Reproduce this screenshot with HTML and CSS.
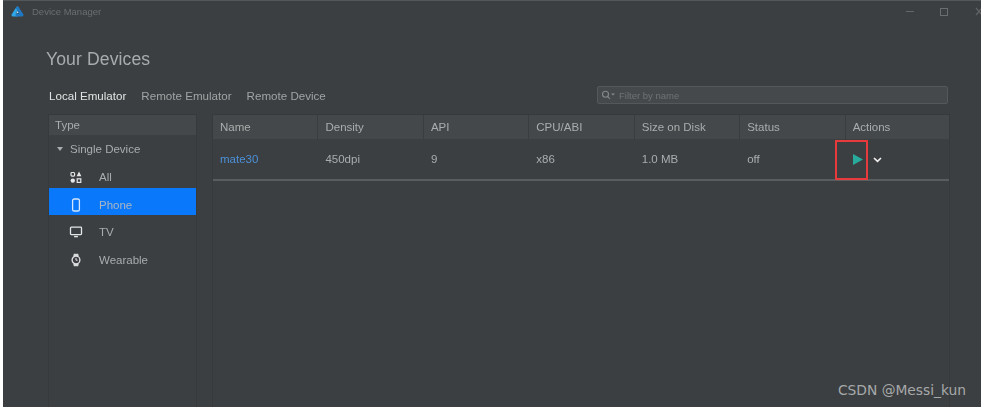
FILE: index.html
```html
<!DOCTYPE html>
<html lang="en">
<head>
<meta charset="utf-8">
<title>Device Manager</title>
<link rel="stylesheet" href="styles.css">
</head>
<body>
<div class="window">
  <header class="titlebar">
    <svg class="logo" width="13" height="11" viewBox="0 0 13 11"><path d="M6.5 2 L2 9 H6" stroke="#2fa6e6" stroke-width="3" stroke-linejoin="round" stroke-linecap="round" fill="none"/><path d="M6.5 2 L11 9 H6" stroke="#1f78c4" stroke-width="3" stroke-linejoin="round" stroke-linecap="round" fill="none"/><path d="M6.5 5 L5.4 7 H7.6 Z" fill="#b9def3"/></svg>
    <span class="app-name">Device Manager</span>
    <div class="win-controls">
      <span class="win-min"></span>
      <span class="win-max"></span>
      <svg class="win-close" width="8" height="9" viewBox="0 0 8 9"><path d="M1 1 L7 8 M7 1 L1 8" stroke="#5f6365" stroke-width="1.2" fill="none"/></svg>
    </div>
  </header>
  <main class="content">
    <h1 class="heading">Your Devices</h1>
    <div class="toolbar">
      <nav class="tabs">
        <span class="tab active">Local Emulator</span>
        <span class="tab">Remote Emulator</span>
        <span class="tab">Remote Device</span>
      </nav>
      <div class="search">
        <svg width="15" height="10" viewBox="0 0 15 10"><circle cx="4.5" cy="4.2" r="3" stroke="#85898b" stroke-width="1.1" fill="none"/><path d="M6.8 6.6 L9 9" stroke="#85898b" stroke-width="1.1"/><path d="M10 3.4 L14 3.4 L12 5.6 Z" fill="#85898b"/></svg>
        <span>Filter by name</span>
      </div>
    </div>
    <div class="panels">
      <aside class="sidebar">
        <div class="side-head">Type</div>
        <div class="group"><span class="caret"></span>Single Device</div>
        <div class="side-item">
          <svg class="ico" width="12" height="13" viewBox="0 0 12 13"><rect x="1" y="1.5" width="3.6" height="3.6" rx="1" stroke="#e4e6e7" stroke-width="1.2" fill="none"/><path d="M9 0.6 L11.4 5.2 L6.6 5.2 Z" fill="#e4e6e7"/><circle cx="2.8" cy="9.6" r="2.2" fill="#e4e6e7"/><rect x="7.2" y="7.8" width="3.6" height="3.6" stroke="#e4e6e7" stroke-width="1.2" fill="none"/></svg>
          <span>All</span>
        </div>
        <div class="side-item selected">
          <svg class="ico" width="12" height="14" viewBox="0 0 12 14"><rect x="2.6" y="1" width="6.8" height="12" rx="1.6" stroke="#d4e6fb" stroke-width="1.3" fill="none"/></svg>
          <span>Phone</span>
        </div>
        <div class="side-item">
          <svg class="ico" width="13" height="12" viewBox="0 0 13 12"><rect x="1" y="1.2" width="11" height="7.4" rx="0.8" stroke="#e4e6e7" stroke-width="1.3" fill="none"/><path d="M4.6 10.6 H8.4" stroke="#e4e6e7" stroke-width="1.4"/></svg>
          <span>TV</span>
        </div>
        <div class="side-item">
          <svg class="ico" width="12" height="14" viewBox="0 0 12 14"><path d="M3.8 0.8 H8.2 L8.7 3 H3.3 Z M3.3 11 H8.7 L8.2 13.2 H3.8 Z" fill="#d4d6d7"/><circle cx="6" cy="7" r="3.9" stroke="#e4e6e7" stroke-width="1.3" fill="none"/><path d="M6 5 V7.2 H7.6" stroke="#e4e6e7" stroke-width="1" fill="none"/></svg>
          <span>Wearable</span>
        </div>
      </aside>
      <section class="table">
        <div class="row head">
          <div class="cell">Name</div>
          <div class="cell">Density</div>
          <div class="cell">API</div>
          <div class="cell">CPU/ABI</div>
          <div class="cell">Size on Disk</div>
          <div class="cell">Status</div>
          <div class="cell">Actions</div>
        </div>
        <div class="row body">
          <div class="cell link">mate30</div>
          <div class="cell">450dpi</div>
          <div class="cell">9</div>
          <div class="cell">x86</div>
          <div class="cell">1.0 MB</div>
          <div class="cell">off</div>
          <div class="cell actions">
            <span class="highlight">
              <svg width="10" height="11" viewBox="0 0 10 11"><path d="M0 0 L10 5.5 L0 11 Z" fill="#28ab9c"/></svg>
            </span>
            <svg class="chev" width="9" height="6" viewBox="0 0 9 6"><path d="M1 1 L4.5 4.4 L8 1" stroke="#f0f0f0" stroke-width="1.6" fill="none"/></svg>
          </div>
        </div>
      </section>
    </div>
  </main>
  <div class="watermark">CSDN @Messi_kun</div>
</div>
</body>
</html>
```

FILE: styles.css
```css
* { box-sizing: border-box; }
html, body { margin: 0; height: 100%; overflow: hidden; background: #ffffff; }
body { padding: 0 1px 0 3px; font-family: "Liberation Sans", Arial, sans-serif; }
.window {
  position: relative;
  height: 407px;
  background: #3c3f41;
  border-top: 1px solid #55585a;
  color: #a9adae;
  font-size: 11.5px;
  display: flex;
  flex-direction: column;
  overflow: hidden;
}
.titlebar { height: 21px; flex: none; display: flex; align-items: center; padding-left: 8px; filter: blur(0.3px); }
.logo { margin-right: 8px; }
.app-name { font-size: 9.5px; color: #6a6e70; }
.win-controls { margin-left: auto; display: flex; align-items: center; }
.win-min { width: 8px; height: 1px; background: #63676a; margin-right: 26px; }
.win-max { width: 8px; height: 8px; border: 1px solid #6a6e70; margin-right: 27px; }
.win-close { margin-right: -2px; }
.content { flex: 1; display: flex; flex-direction: column; padding-left: 43px; min-height: 0; filter: blur(0.3px); }
.heading { margin: 17px 0 0; font-size: 17.6px; font-weight: 400; line-height: 40px; height: 40px; color: #a8acad; letter-spacing: 0.1px; }
.toolbar { display: flex; align-items: center; height: 18px; margin-top: 7px; padding-left: 3px; }
.tabs { display: flex; gap: 15px; width: 548px; flex: none; }
.tab { font-size: 11.6px; color: #a0a4a5; white-space: nowrap; }
.tab.active { color: #e2e4e4; }
.search {
  width: 351px; height: 18px; flex: none;
  display: flex; align-items: center; gap: 3px;
  padding-left: 3px;
  background: #46494b;
  border: 1px solid #55585a;
  border-radius: 2px;
  font-size: 9.5px;
  color: #6f7375;
}
.panels { display: flex; flex: 1; margin-top: 10px; padding-left: 2px; min-height: 0; }
.sidebar { width: 149px; flex: none; border-left: 1px solid #37393b; border-right: 1px solid #37393b; border-top: 1px solid #37393b; margin-right: 15px; }
.side-head { height: 20px; background: #45484a; padding-left: 6px; line-height: 21px; color: #a9adae; }
.group { height: 25px; padding: 2px 0 0 8px; display: flex; align-items: center; }
.caret { width: 0; height: 0; border-left: 3.5px solid transparent; border-right: 3.5px solid transparent; border-top: 4px solid #a9adae; margin-right: 7px; }
.side-item { display: flex; align-items: center; height: 27.6px; padding: 7px 0 0 20px; }
.side-item .ico { width: 14px; margin-right: 16px; flex: none; }
.side-item.selected { background: #0a78fa; color: #aab6c4; }
.table { width: 738px; flex: none; border-left: 1px solid #37393b; border-right: 1px solid #37393b; border-top: 1px solid #37393b; }
.row { display: grid; grid-template-columns: repeat(6, 105.45px) 1fr; }
.head { height: 24px; background: #45484a; }
.head .cell { border-right: 1px solid #3a3c3e; line-height: 25px; padding-left: 7px; }
.head .cell:last-child { border-right: 0; }
.body { height: 42px; border-bottom: 2px solid #5a5d5f; }
.body .cell { padding-left: 7px; line-height: 41px; }
.body .link { color: #4b90d9; }
.actions { display: flex; align-items: center; padding-left: 0 !important; position: relative; }
.highlight { display: flex; align-items: center; justify-content: center; width: 33px; height: 40px; border: 2px solid #e83a3a; margin-left: -11px; flex: none; padding-left: 13px; }
.chev { margin-left: 5px; }
.watermark { position: absolute; right: 15px; bottom: 9px; color: #a6a9aa; font-family: "DejaVu Sans", sans-serif; font-size: 13.8px; }
```
